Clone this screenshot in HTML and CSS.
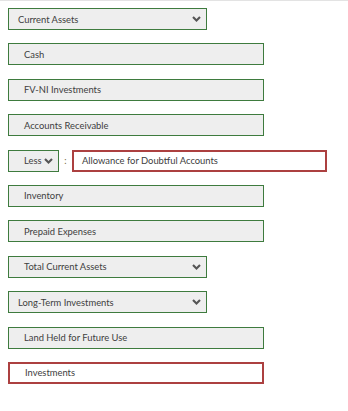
FILE: index.html
```html
<!DOCTYPE html>
<html lang="en">

<head>
    <meta charset="UTF-8">
    <meta name="viewport" content="width=device-width, initial-scale=1.0">
    <title>Balance Sheet - Assets</title>
    <link rel="stylesheet" href="styles.css">
</head>

<body>
    <div class="topbar"></div>

    <!-- Answer rows -->
    <div class="rows">
        <div class="select wide">
            <span class="label">Current Assets</span>
            <svg class="chev" width="9" height="6" viewBox="0 0 9 6"><path d="M1 1 L4.5 4.5 L8 1" /></svg>
        </div>

        <div class="box ok">Cash</div>
        <div class="box ok">FV-NI Investments</div>
        <div class="box ok">Accounts Receivable</div>

        <div class="line">
            <div class="select small">
                <span class="label">Less</span>
                <svg class="chev" width="9" height="6" viewBox="0 0 9 6"><path d="M1 1 L4.5 4.5 L8 1" /></svg>
            </div>
            <span class="colon">:</span>
            <div class="box bad grow">Allowance for Doubtful Accounts</div>
        </div>

        <div class="box ok">Inventory</div>
        <div class="box ok">Prepaid Expenses</div>

        <div class="select wide indent">
            <span class="label">Total Current Assets</span>
            <svg class="chev" width="9" height="6" viewBox="0 0 9 6"><path d="M1 1 L4.5 4.5 L8 1" /></svg>
        </div>

        <div class="select wide">
            <span class="label">Long-Term Investments</span>
            <svg class="chev" width="9" height="6" viewBox="0 0 9 6"><path d="M1 1 L4.5 4.5 L8 1" /></svg>
        </div>

        <div class="box ok">Land Held for Future Use</div>
        <div class="box bad white">Investments</div>
    </div>
</body>

</html>
```

FILE: styles.css
```css
body, html {
    margin: 0;
    padding: 0;
    background: #fff;
}

body {
    font-family: 'Lato', 'Liberation Sans', sans-serif;
    font-size: 9.4px;
    color: #404040;
}

.topbar {
    height: 1px;
    background-color: #e3e3e3;
}

/* Column of answer rows */
.rows {
    display: flex;
    flex-direction: column;
    gap: 13.4px;
    padding: 7px 8px 0 8px;
}

.box {
    box-sizing: border-box;
    height: 22px;
    width: 256px;
    display: flex;
    align-items: center;
    padding-left: 15px;
    background-color: #eeeeee;
}

.box.ok {
    border: 1px solid #3e7b3e;
}

.box.bad {
    border: 2px solid #ac4040;
    padding-left: 14px;
}

.box.white {
    background-color: #fff;
    padding-left: 15px;
}

/* Dropdowns */
.select {
    box-sizing: border-box;
    height: 22px;
    display: flex;
    align-items: center;
    justify-content: space-between;
    background-color: #eeeeee;
    border: 1px solid #3e7b3e;
}

.select.wide {
    width: 199px;
    padding: 0 5px 0 9px;
}

.select.indent {
    padding-left: 15px;
}

.select.small {
    width: 51px;
    padding: 0 5px 0 15px;
}

.chev path {
    fill: none;
    stroke: #555;
    stroke-width: 2.1;
}

.line {
    display: flex;
    align-items: center;
}

.colon {
    width: 13px;
    text-align: center;
    color: #7a6a3a;
}

.box.grow {
    width: 255px;
    background-color: #fff;
    padding-left: 8px;
}
```
